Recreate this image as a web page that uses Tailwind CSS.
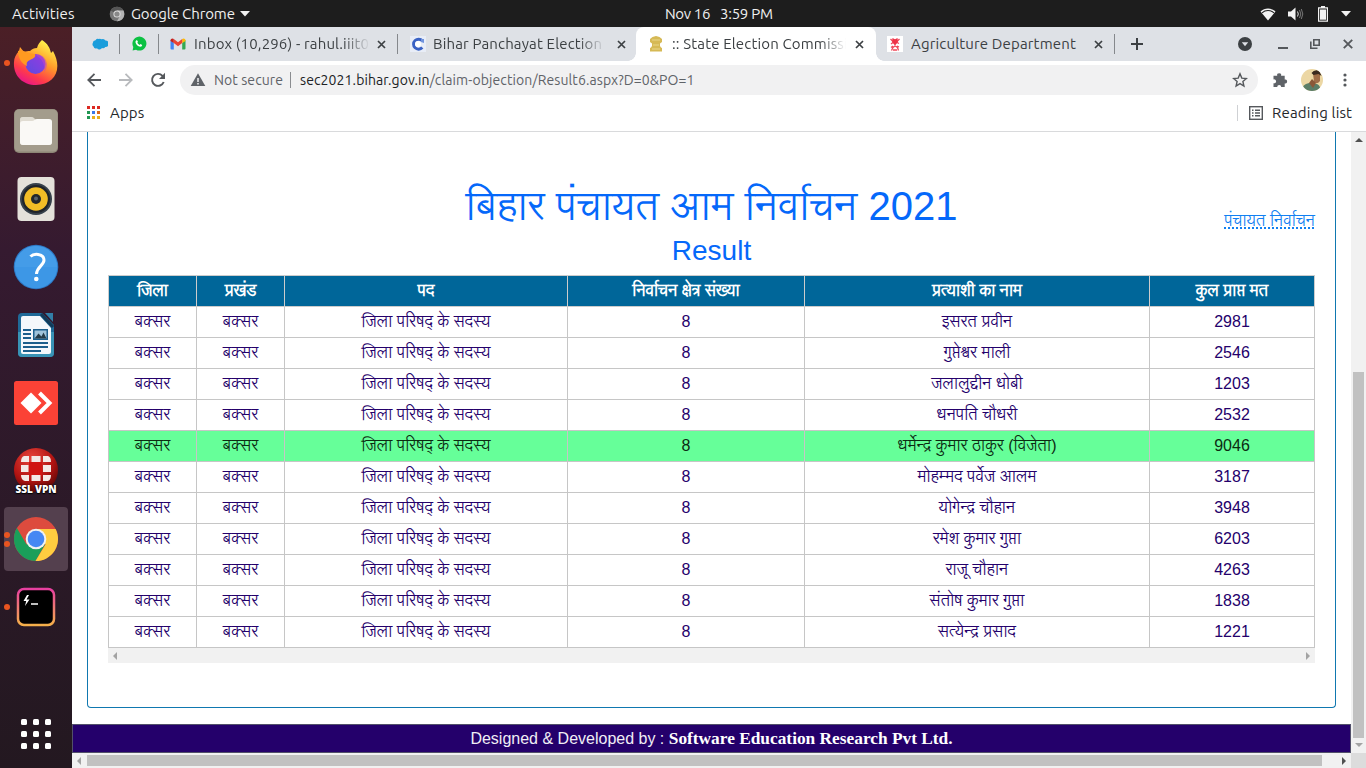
<!DOCTYPE html>
<html lang="hi">
<head>
<meta charset="utf-8">
<title>:: State Election Commission</title>
<script src="https://cdn.jsdelivr.net/npm/@tailwindcss/browser@4"></script>
</head>
<body class="w-[1366px] h-[768px] overflow-hidden bg-white flex flex-col font-['Ubuntu','Noto_Sans',sans-serif]">

<!-- Desktop top bar -->
<header class="h-[27px] shrink-0 bg-[#1d1d1d] text-[#f0f0f0] text-[15px] leading-[27px] grid grid-cols-[1fr_auto_1fr] whitespace-nowrap">
  <div class="flex items-center pl-3">
    <span class="w-[97px] tracking-[0.1px]">Activities</span>
    <svg class="w-4 h-4 mr-[6px]" viewBox="0 0 16 16"><circle cx="8" cy="8" r="7.3" fill="#777"/><path d="M8 8 1.7 4.4A7.3 7.3 0 0 1 14.5 4.6H8Z" fill="#555"/><path d="M8 4.6h6.5A7.3 7.3 0 0 1 8 15.3l3-5.5Z" fill="#b4b4b4"/><circle cx="8" cy="8" r="3.6" fill="#ddd"/><circle cx="8" cy="8" r="2.6" fill="#888"/></svg>
    <span class="w-[104px] tracking-[-0.1px]">Google Chrome</span>
    <svg class="w-[10px] h-[6px] ml-[5px]" viewBox="0 0 10 6"><path d="M0 0h10L5 5.5Z" fill="#f2f2f2"/></svg>
  </div>
  <div class="flex gap-[10px] pl-[72px]"><span class="w-[45px] tracking-[-0.35px]">Nov 16</span><span class="w-[53px] tracking-[-0.25px]">3:59 PM</span></div>
  <div class="flex items-center justify-end pr-[15px]">
    <svg class="w-4 h-[14px] mr-[12px]" viewBox="0 0 16 14"><path d="M0.5 4.6C4.5.6 11.500.6 15.500 4.600L8 13.500Z" fill="#f2f2f2"/><path d="M2 5.800C5.500 2.800 10.500 2.800 14 5.800" fill="none" stroke="#1d1d1d" stroke-width="1.100"/></svg>
    <svg class="w-4 h-[14px] mr-[14px]" viewBox="0 0 16 14"><path d="M0 4.500h3L7.500.5v13L3 9.500H0Z" fill="#f2f2f2"/><path d="M9.500 4.500q1.600 2.500 0 5" stroke="#ddd" fill="none"/><path d="M11.500 3q2.600 4 0 8M13.300 2q3 5 0 10" stroke="#777" fill="none"/></svg>
    <svg class="w-[10px] h-[16px] mr-[13px]" viewBox="0 0 10 16"><path d="M3 0h4v1.300h3V15.800H0V1.300H3Z" fill="#f2f2f2"/><path d="M1.200 2.500h7.600v12.100H1.200Z" fill="#1d1d1d"/><path d="M2 3.500h6v10.200H2Z" fill="#f2f2f2"/></svg>
    <svg class="w-[10px] h-[6px]" viewBox="0 0 10 6"><path d="M0 0h10L5 5.500Z" fill="#f2f2f2"/></svg>
  </div>
</header>

<div class="flex flex-1 min-h-0">

<!-- Dock -->
<nav class="w-[72px] shrink-0 bg-linear-to-b from-[#4b1f26] via-[#351a30] via-30% to-[#231820] pt-1 px-1 flex flex-col gap-1">
  <div class="h-16 relative flex items-center justify-center">
    <i class="absolute left-0 top-[29px] w-[6px] h-[6px] rounded-full bg-[#e95420]"></i>
    <svg class="w-[46px] h-[48px]" viewBox="0 0 46 48"><defs><linearGradient id="fx" x1=".8" y1=".1" x2=".3" y2="1"><stop offset="0" stop-color="#fff04a"/><stop offset=".4" stop-color="#ff9a2a"/><stop offset=".75" stop-color="#ff3b4a"/><stop offset="1" stop-color="#e8158a"/></linearGradient><linearGradient id="fp" x1="0" y1="1" x2="1" y2="0"><stop offset="0" stop-color="#5b4be0"/><stop offset="1" stop-color="#9a3ae0"/></linearGradient></defs><path d="M29 1c6 4 8 8 9 13l2-2c10 18 2 34-17 34C9 46 0 36 1 23c0-4 2-8 5-11l1-4 4 5c2-1 4-1 6-1 2-2 4-3 7-3 1-4 3-6 5-8Z" fill="url(#fx)"/><circle cx="22.500" cy="25" r="10" fill="url(#fp)"/><path d="M5 12c4-1 7 0 9 2l8 1c1 3-1 4-5 6-3 1-4 3-3 6-5-2-9-8-9-15Z" fill="#ff9a20"/><path d="M22 16c5-2 11 2 12 9 0 3-1 6-3 8 1-7-1-13-9-17Z" fill="#c04ac0" opacity=".5"/></svg>
  </div>
  <div class="h-16 flex items-center justify-center">
    <svg class="w-[46px] h-[46px]" viewBox="0 0 46 46"><rect x="1" y="1" width="44" height="44" rx="5" fill="#8d8676"/><rect x="1.500" y="1.500" width="43" height="42" rx="4.500" fill="#a39c8c"/><path d="M7 12q0-3 3-3h9q1.500 0 2.500 1.500L23 12h12v6H7Z" fill="#d3cec2"/><path d="M7 12q0-3 3-3h8q2 0 3 1.500t3 1.500h12q3 0 3 3v19q0 3-3 3H10q-3 0-3-3Z" fill="#e0dcd2"/><path d="M7 16q0-3 3-3h9q1.500 0 2.500-1t2.500-1h12q3 0 3 3v20q0 3-3 3H10q-3 0-3-3Z" fill="#faf9f6"/></svg>
  </div>
  <div class="h-16 flex items-center justify-center">
    <svg class="w-[38px] h-[46px]" viewBox="0 0 38 46"><rect x=".5" y="1" width="37" height="44" rx="4" fill="#e4e1da"/><circle cx="19" cy="23" r="16" fill="#36404a"/><circle cx="19" cy="23" r="14" fill="#20242a"/><circle cx="19" cy="23" r="11.800" fill="#f2bd26"/><circle cx="19" cy="23" r="5" fill="#23272c"/><circle cx="19" cy="22.500" r="2" fill="#59626b"/></svg>
  </div>
  <div class="h-16 flex items-center justify-center">
    <svg class="w-[46px] h-[46px]" viewBox="0 0 46 46"><circle cx="23" cy="23" r="22.300" fill="#2c77c4"/><circle cx="23" cy="23" r="21.300" fill="#3d97e6"/><path d="M2 23a21 21 0 0 1 42 0Z" fill="#4ba2ea" opacity=".5"/><path d="M17.500 12.500c3-3 13-3.500 13.500 3.500 0 5.500-7 6.500-7.500 14" fill="none" stroke="#fff" stroke-width="3"/><circle cx="23.300" cy="35" r="2.300" fill="#fff"/></svg>
  </div>
  <div class="h-16 flex items-center justify-center">
    <svg class="w-[38px] h-[46px]" viewBox="0 0 38 46"><path d="M5 1h20l12 12v28q0 4-4 4H5q-4 0-4-4V5q0-4 4-4Z" fill="#1f6a98"/><path d="M5 20H1v21q0 4 4 4h28q4 0 4-4V20Z" fill="#3893b5"/><path d="M6 4h17l11 12v24q0 2-2 2H6q-2 0-2-2V6q0-2 2-2Z" fill="#f4f8fb"/><path d="M28 1h8v9Z" fill="#327fa8"/><path d="M24 2l12 13" stroke="#123a58" stroke-width="3"/><g fill="#1c5f8c"><path d="M6 17h8v2H6zM6 21h8v2H6zM6 25h8v2H6zM6 30h25v2H6zM6 34h25v2H6zM6 38h18v2H6zM16 17h15v11H16z"/></g><path d="M17.500 18.500h12v8h-12z" fill="#9fc3da"/><path d="M17.500 26.500l4-5 3 3 2-4 3 6Z" fill="#263c48"/></svg>
  </div>
  <div class="h-16 flex items-center justify-center">
    <svg class="w-[46px] h-[46px]" viewBox="0 0 46 46"><rect x="1" y="1" width="44" height="44" rx="2.500" fill="#fb4236"/><path d="M7.500 23 18 12.500 28.500 23 18 33.500Z" fill="#fff"/><path d="M26.500 13 36.500 23l-10 10" stroke="#fff" stroke-width="4" fill="none"/></svg>
  </div>
  <div class="h-16 relative flex items-center justify-center">
    <svg class="w-[48px] h-[48px]" viewBox="0 0 48 48"><defs><radialGradient id="sv" cx=".4" cy=".25" r=".8"><stop offset="0" stop-color="#e8453c"/><stop offset=".6" stop-color="#b31412"/><stop offset="1" stop-color="#5a0606"/></radialGradient></defs><circle cx="24" cy="23" r="22" fill="url(#sv)"/><path d="M17 15h13v14H17z" fill="#d01512"/><g fill="#f3e9e6"><path d="M12 9h5v6H9q0-5 3-6zM19.500 9h9v6h-9zM31 9h5q3 1 3 6h-8zM9 18h7.500v7H9zM31 18h8v7h-8zM9 28h8v6h-4q-4-1-4-6zM19.500 28h9v6h-9zM31 28h8q0 5-3 6h-5z"/></g></svg>
    <b class="absolute bottom-[8px] left-0 right-0 text-center text-[10px] leading-[11px] text-white font-['Open_Sans',sans-serif] font-extrabold tracking-[-0.1px] whitespace-nowrap [text-shadow:0_0_2px_#000,0_1px_1px_#000]">SSL VPN</b>
  </div>
  <div class="h-16 relative flex items-center justify-center rounded-[4px] bg-[#54404e]">
    <i class="absolute left-0 top-[25px] w-[6px] h-[6px] rounded-full bg-[#e95420]"></i>
    <i class="absolute left-0 top-[34px] w-[6px] h-[6px] rounded-full bg-[#e95420]"></i>
    <svg class="w-[46px] h-[46px]" viewBox="0 0 46 46"><circle cx="23" cy="23" r="22" fill="#dd4b3e"/><path d="M3.900 12A22 22 0 0 0 22.500 45L32 28.500 23 23 13.500 28.500Z" fill="#1a9f5a"/><path d="M23 13h19.600A22 22 0 0 1 22.500 45l10-16.500Z" fill="#ffcd40"/><circle cx="23" cy="23" r="10.300" fill="#f1f1f1"/><circle cx="23" cy="23" r="8.300" fill="#4587f3"/></svg>
  </div>
  <div class="h-16 relative flex items-center justify-center">
    <i class="absolute left-0 top-[29px] w-[6px] h-[6px] rounded-full bg-[#e95420]"></i>
    <svg class="w-[40px] h-[40px]" viewBox="0 0 40 40"><defs><linearGradient id="tm" x1="0" y1="0" x2="0" y2="1"><stop offset="0" stop-color="#e83fa0"/><stop offset="1" stop-color="#f5b04a"/></linearGradient></defs><rect x="2" y="2" width="36" height="36" rx="6" fill="#000" stroke="url(#tm)" stroke-width="2.500"/><path d="M11 8 7.500 14h2.700L9 19l4.500-6.500h-3L13 8Z" fill="#fff"/><path d="M15 17h7" stroke="#fff" stroke-width="1.500"/></svg>
  </div>
  <div class="mt-auto mb-[19px] mx-auto grid grid-cols-3 gap-[6px]">
    <i class="w-[6px] h-[6px] rounded-[1.500px] bg-white"></i><i class="w-[6px] h-[6px] rounded-[1.500px] bg-white"></i><i class="w-[6px] h-[6px] rounded-[1.500px] bg-white"></i>
    <i class="w-[6px] h-[6px] rounded-[1.500px] bg-white"></i><i class="w-[6px] h-[6px] rounded-[1.500px] bg-white"></i><i class="w-[6px] h-[6px] rounded-[1.500px] bg-white"></i>
    <i class="w-[6px] h-[6px] rounded-[1.500px] bg-white"></i><i class="w-[6px] h-[6px] rounded-[1.500px] bg-white"></i><i class="w-[6px] h-[6px] rounded-[1.500px] bg-white"></i>
  </div>
</nav>

<!-- Browser window -->
<div class="flex-1 min-w-0 flex flex-col">

  <!-- Tab strip -->
  <div class="h-[34px] shrink-0 bg-[#dee1e6] flex items-center text-[15px] text-[#3c4043] whitespace-nowrap">
    <div class="w-[47px] pl-5"><svg class="w-4 h-4" viewBox="0 0 16 16"><path d="M3.500 4.200A3 3 0 0 1 6.800 3 3 3 0 0 1 9.500 3.300 3.200 3.200 0 0 1 13.500 4.500 3.200 3.200 0 0 1 13.200 11 2.500 2.500 0 0 1 10 12 3 3 0 0 1 5 12.300 2.600 2.600 0 0 1 1.500 10.500 3 3 0 0 1 .8 7 3 3 0 0 1 3.500 4.200Z" fill="#1a9ddb"/></svg></div>
    <i class="w-px h-5 bg-[#85888c]"></i>
    <div class="w-[38px] pl-[11px]"><svg class="w-4 h-4" viewBox="0 0 16 16"><path d="M1.600 14.500 2.300 11A7 7 0 1 1 5 13.700Z" fill="#0cc143"/><path d="M5.300 4.300q.8-.5 1.200.5l.4 1q-.1.500-.6.900.8 1.500 2.400 2.200l.8-.8 1.700.8q0 1.500-1.800 1.800C7 10.700 4.300 8 4.500 5.500Z" fill="#fff"/></svg></div>
    <i class="w-px h-5 bg-[#85888c]"></i>
    <div class="w-[238px] pl-[11px] flex items-center">
      <svg class="w-4 h-4 shrink-0" viewBox="0 0 16 16"><path d="M.5 4v8.500q0 1 1 1h2.300V7Z" fill="#4285f4"/><path d="M15.500 4v8.500q0 1-1 1h-2.300V7Z" fill="#34a853"/><path d="M.5 4.300q0-1.800 2-1.800L3.800 3v4L.5 4.900Z" fill="#c5221f"/><path d="M15.500 4.300q0-1.800-2-1.800L12.200 3v4l3.300-2.100Z" fill="#fbbc04"/><path d="M3.800 3 8 6.200 12.200 3v4L8 10.200 3.800 7Z" fill="#ea4335"/></svg>
      <span class="ml-2 w-[176px] mask-r-from-85% tracking-[0.15px]">Inbox (10,296) - rahul.iiit0</span>
      <svg class="w-[9px] h-[9px] ml-[7px]" viewBox="0 0 9 9"><path d="M1 1l7 7M8 1 1 8" stroke="#3c4043" stroke-width="1.700"/></svg>
    </div>
    <i class="w-px h-5 bg-[#85888c]"></i>
    <div class="w-[238px] pl-[12px] flex items-center">
      <svg class="w-4 h-4 shrink-0" viewBox="0 0 16 16"><rect width="16" height="16" fill="#e8edf7"/><path d="M12.300 4.800A5 5 0 1 0 12.300 11.500" stroke="#3a62c4" stroke-width="3" fill="none"/><path d="M11 3l3 0v4l-3-1Z" fill="#6f93dd"/><circle cx="8" cy="8" r="3" fill="#fff"/></svg>
      <span class="ml-[7px] w-[172px] mask-r-from-85% tracking-[0.15px]">Bihar Panchayat Election</span>
      <svg class="w-[9px] h-[9px] ml-[12px]" viewBox="0 0 9 9"><path d="M1 1l7 7M8 1 1 8" stroke="#3c4043" stroke-width="1.700"/></svg>
    </div>
    <div class="w-[240px] h-full pl-[12px] flex items-center bg-white rounded-t-[8px] relative">
      <i class="absolute -left-2 bottom-0 w-2 h-2 bg-[radial-gradient(circle_at_0_0,#dee1e6_7.5px,#fff_8px)]"></i>
      <i class="absolute -right-2 bottom-0 w-2 h-2 bg-[radial-gradient(circle_at_100%_0,#dee1e6_7.5px,#fff_8px)]"></i>
      <svg class="w-4 h-4 shrink-0" viewBox="0 0 16 16"><path d="M2 3 4.500 1 8 0l3.500 1L14 3v3l-2 1.500v2.500l1 1.500 1 .5v3.500H2V12l1-.5 1-1.500V7.500L2 6Z" fill="#d6b955"/><path d="M4 4h8M5 9h6M4 13h8" stroke="#e9d68a"/></svg>
      <span class="ml-2 w-[174px] mask-r-from-85% tracking-[0.15px]">:: State Election Commissi</span>
      <svg class="w-[9px] h-[9px] ml-[9px]" viewBox="0 0 9 9"><path d="M1 1l7 7M8 1 1 8" stroke="#3c4043" stroke-width="1.700"/></svg>
    </div>
    <div class="w-[238px] pl-[11px] flex items-center">
      <svg class="w-4 h-4 shrink-0" viewBox="0 0 16 16"><rect width="16" height="16" fill="#fff"/><path d="M3.500 3l2 2M12.500 3l-2 2M4 8l2-1.500M12 7.500l-2-1M4.500 14.500 6 11.500 8 10l2.500 1.500 1 3M4 11.500 6 10M12 11l-2-1M6 14h4" stroke="#f0485a" stroke-width="1.300" fill="none"/><path d="M5.500 2 8 3.200 10.500 2l.5 4-3 3.500L5 6Z" fill="#ee3348"/></svg>
      <span class="ml-2 w-[175px] tracking-[0.15px]">Agriculture Department</span>
      <svg class="w-[9px] h-[9px] ml-[8px]" viewBox="0 0 9 9"><path d="M1 1l7 7M8 1 1 8" stroke="#3c4043" stroke-width="1.700"/></svg>
    </div>
    <i class="w-px h-5 bg-[#85888c]"></i>
    <svg class="w-3 h-3 ml-4" viewBox="0 0 12 12"><path d="M6 0v12M0 6h12" stroke="#3c4043" stroke-width="2"/></svg>
    <div class="ml-auto flex items-center pr-[13px]">
      <svg class="w-[14px] h-[14px]" viewBox="0 0 14 14"><circle cx="7" cy="7" r="7" fill="#3c4043"/><path d="M3.800 5.300h6.400L7 9.300Z" fill="#dee1e6"/></svg>
      <svg class="w-[10px] h-[14px] ml-[26px]" viewBox="0 0 10 14"><path d="M0 11h10" stroke="#55585c" stroke-width="2"/></svg>
      <svg class="w-[10px] h-[10px] ml-[22px]" viewBox="0 0 10 10"><path d="M3.800.8h5.400v5.400H3.800ZM.8 2.500v6.700H7.500" stroke="#55585c" stroke-width="1.600" fill="none"/></svg>
      <svg class="w-[10px] h-[10px] ml-[23px]" viewBox="0 0 10 10"><path d="M.8.8l8.400 8.400M9.200.8.8 9.200" stroke="#55585c" stroke-width="1.900"/></svg>
    </div>
  </div>

  <!-- Toolbar -->
  <div class="h-[38px] shrink-0 flex items-center pl-[15px] pr-[19px]">
    <svg class="w-[14px] h-[14px]" viewBox="0 0 14 14"><path d="M14 7H1.500M7.500.8 1.300 7l6.200 6.200" stroke="#55585c" stroke-width="1.800" fill="none"/></svg>
    <svg class="w-[14px] h-[14px] ml-[18px]" viewBox="0 0 14 14"><path d="M0 7h12.500M6.500.8 12.700 7l-6.200 6.200" stroke="#b8babd" stroke-width="1.800" fill="none"/></svg>
    <svg class="w-4 h-4 ml-[17px]" viewBox="0 0 16 16"><path d="M13.700 10A6 6 0 1 1 12.500 3.800L14 5.300" stroke="#55585c" stroke-width="1.900" fill="none"/><path d="M15 .8V7H9Z" fill="#55585c"/></svg>
    <div class="ml-[14px] w-[1078px] h-[30px] rounded-full bg-[#f1f1f2] flex items-center pl-[10px] pr-[10px] text-[14px] text-[#5f6368] whitespace-nowrap">
      <svg class="w-4 h-4" viewBox="0 0 16 16"><path d="M8 1.300 15.300 14H.7Z" fill="#5f6368"/><path d="M8 6v4M8 11v1.600" stroke="#f1f1f2" stroke-width="1.500"/></svg>
      <span class="ml-2 w-[76px] tracking-[0.08px]">Not secure</span>
      <i class="w-px h-4 bg-[#8a8c90]"></i>
      <span class="ml-[9px] tracking-[0.1px]"><span class="text-[#202124]">sec2021.bihar.gov.in</span>/claim-objection/Result6.aspx?D=0&amp;PO=1</span>
      <svg class="w-4 h-4 ml-auto" viewBox="0 0 16 16"><path d="M8 1.800l1.800 4.300 4.600.4-3.500 3 1 4.500L8 11.600 4.100 14l1-4.500-3.500-3 4.600-.4Z" fill="none" stroke="#55585c" stroke-width="1.400"/></svg>
    </div>
    <svg class="w-4 h-4 ml-[14px]" viewBox="0 0 16 16"><path d="M1.500 3.800h3.700a2 2 0 1 1 3.900 0h3.600v3.700a2 2 0 1 1 0 3.900v3.600H9.200a2 2 0 1 0-4 0H1.500v-3.800a2 2 0 1 0 0-3.800Z" fill="#5f6368"/></svg>
    <svg class="w-[22px] h-[22px] ml-[13px]" viewBox="0 0 22 22"><defs><clipPath id="av"><circle cx="11" cy="11" r="11"/></clipPath></defs><g clip-path="url(#av)"><rect width="22" height="22" fill="#ecd7a4"/><path d="M1 22q0-7 7-8l8 1q4 2 4 8Z" fill="#5b7d67"/><path d="M12 4h7v8q-3 4-6 1Z" fill="#a06d48"/><path d="M10.500 4q3-4 8-2l2 5-3-2-5 1Z" fill="#3a2a20"/><path d="M11 10l4 4-3 5-4-5Z" fill="#8a5838"/></g></svg>
    <svg class="w-1 h-[14px] ml-auto" viewBox="0 0 4 14"><g fill="#55585c"><circle cx="2" cy="2" r="1.600"/><circle cx="2" cy="7" r="1.600"/><circle cx="2" cy="12" r="1.600"/></g></svg>
  </div>

  <!-- Bookmarks bar -->
  <div class="h-[33px] shrink-0 border-b border-[#d9dadc] flex items-center pl-[15px] pr-[14px] pb-[5px] text-[15px] text-[#25282b] whitespace-nowrap">
    <svg class="w-[13px] h-[13px]" viewBox="0 0 13 13"><path d="M0 0h3v3H0zM5 0h3v3H5zM10 0h3v3h-3z" fill="#dc2a22"/><path d="M0 5h3v3H0z" fill="#219653"/><path d="M5 5h3v3H5z" fill="#3a78e8"/><path d="M10 5h3v3h-3z" fill="#d9671e"/><path d="M0 10h3v3H0z" fill="#219653"/><path d="M5 10h3v3H5zM10 10h3v3h-3z" fill="#e8ae1c"/></svg>
    <span class="ml-[10px] pt-[2px] tracking-[0.15px]">Apps</span>
    <i class="ml-auto w-px h-4 bg-[#cfd1d4]"></i>
    <svg class="w-[14px] h-[14px] ml-[11px]" viewBox="0 0 14 14"><rect x=".7" y=".7" width="12.600" height="12.600" fill="none" stroke="#55585c" stroke-width="1.400"/><path d="M3 4.200h1.500M3 7h1.500M3 9.800h1.500M6 4.200h5M6 7h5M6 9.800h5" stroke="#55585c" stroke-width="1.400"/></svg>
    <span class="ml-[9px] pt-[2px] w-[80px] tracking-[0.15px]">Reading list</span>
  </div>

  <!-- Page viewport -->
  <div class="flex-1 min-h-0 flex">
    <main class="flex-1 min-w-0 flex flex-col font-['Liberation_Sans','Lohit_Devanagari','Noto_Sans_Devanagari',sans-serif]">
      <section class="h-[576px] ml-[15px] mr-[15px] border border-t-0 border-[#0f78b0] rounded-b-[4px] px-5 flex flex-col">
        <div class="h-[143px] shrink-0 grid grid-cols-[1fr_auto_1fr] text-[#0568fa]">
          <div></div>
          <div class="text-center whitespace-nowrap">
            <h1 class="text-[40px] leading-[48px] mt-[50px]">बिहार पंचायत आम निर्वाचन 2021</h1>
            <h2 class="text-[28px] leading-[34px] mt-[4px]">Result</h2>
          </div>
          <div class="text-right pt-[77px]"><a class="text-[16px] leading-6 text-[#1180f2] underline decoration-dotted decoration-2 whitespace-nowrap">पंचायत निर्वाचन</a></div>
        </div>
        <table class="w-[1207px] table-fixed border-collapse text-center text-[16px] leading-[24px] text-[#24006b] whitespace-nowrap">
          <colgroup><col class="w-[88px]"><col class="w-[88px]"><col class="w-[283px]"><col class="w-[237px]"><col class="w-[345px]"><col class="w-[165px]"></colgroup>
          <thead><tr class="h-[31px] bg-[#006699] text-white [&>th]:border [&>th]:border-[#cccccc] [&>th]:p-0 [&>th]:font-bold"><th>जिला</th><th>प्रखंड</th><th>पद</th><th>निर्वाचन क्षेत्र संख्या</th><th>प्रत्याशी का नाम</th><th>कुल प्राप्त मत</th></tr></thead>
          <tbody class="[&_td]:border [&_td]:border-[#c6c6c6] [&_td]:p-0">
            <tr class="h-[31px]"><td>बक्सर</td><td>बक्सर</td><td>जिला परिषद् के सदस्य</td><td>8</td><td>इसरत प्रवीन</td><td>2981</td></tr>
            <tr class="h-[31px]"><td>बक्सर</td><td>बक्सर</td><td>जिला परिषद् के सदस्य</td><td>8</td><td>गुप्तेश्वर माली</td><td>2546</td></tr>
            <tr class="h-[31px]"><td>बक्सर</td><td>बक्सर</td><td>जिला परिषद् के सदस्य</td><td>8</td><td>जलालुद्दीन धोबी</td><td>1203</td></tr>
            <tr class="h-[31px]"><td>बक्सर</td><td>बक्सर</td><td>जिला परिषद् के सदस्य</td><td>8</td><td>धनपति चौधरी</td><td>2532</td></tr>
            <tr class="h-[31px] bg-[#66ff99] text-[#0c2b12]"><td>बक्सर</td><td>बक्सर</td><td>जिला परिषद् के सदस्य</td><td>8</td><td>धर्मेन्द्र कुमार ठाकुर (विजेता)</td><td>9046</td></tr>
            <tr class="h-[31px]"><td>बक्सर</td><td>बक्सर</td><td>जिला परिषद् के सदस्य</td><td>8</td><td>मोहम्मद पर्वेज आलम</td><td>3187</td></tr>
            <tr class="h-[31px]"><td>बक्सर</td><td>बक्सर</td><td>जिला परिषद् के सदस्य</td><td>8</td><td>योगेन्द्र चौहान</td><td>3948</td></tr>
            <tr class="h-[31px]"><td>बक्सर</td><td>बक्सर</td><td>जिला परिषद् के सदस्य</td><td>8</td><td>रमेश कुमार गुप्ता</td><td>6203</td></tr>
            <tr class="h-[31px]"><td>बक्सर</td><td>बक्सर</td><td>जिला परिषद् के सदस्य</td><td>8</td><td>राजू चौहान</td><td>4263</td></tr>
            <tr class="h-[31px]"><td>बक्सर</td><td>बक्सर</td><td>जिला परिषद् के सदस्य</td><td>8</td><td>संतोष कुमार गुप्ता</td><td>1838</td></tr>
            <tr class="h-[31px]"><td>बक्सर</td><td>बक्सर</td><td>जिला परिषद् के सदस्य</td><td>8</td><td>सत्येन्द्र प्रसाद</td><td>1221</td></tr>
          </tbody>
        </table>
        <div class="h-[15px] shrink-0 bg-[#f1f1f1] flex items-center justify-between px-[5px]">
          <svg class="w-1 h-2" viewBox="0 0 4 8"><path d="M4 0v8L0 4Z" fill="#a3a3a3"/></svg>
          <svg class="w-1 h-2" viewBox="0 0 4 8"><path d="M0 0v8L4 4Z" fill="#a3a3a3"/></svg>
        </div>
      </section>
      <footer class="mt-4 h-[29px] bg-[#24006b] border border-[#52506a] text-[#f0eef5] text-[16px] leading-[27px] text-center whitespace-nowrap">Designed &amp; Developed by : <b class="font-['Liberation_Serif',serif] text-[17.33px] text-white">Software Education Research Pvt Ltd.</b></footer>
    </main>
    <div class="w-[15px] shrink-0 bg-[#f1f1f1] flex flex-col items-center pt-[6px] pb-[6px]">
      <svg class="w-2 h-1 shrink-0" viewBox="0 0 8 4"><path d="M0 4h8L4 0Z" fill="#505050"/></svg>
      <i class="w-[11px] h-[366px] mt-[230px] bg-[#c1c1c1]"></i>
      <svg class="w-2 h-1 mt-[5px] shrink-0" viewBox="0 0 8 4"><path d="M0 0h8L4 4Z" fill="#a3a3a3"/></svg>
    </div>
  </div>
  <div class="h-[15px] shrink-0 flex">
    <div class="flex-1 bg-[#f1f1f1] flex items-center px-[5px]">
      <svg class="w-1 h-2" viewBox="0 0 4 8"><path d="M4 0v8L0 4Z" fill="#a3a3a3"/></svg>
      <i class="ml-[6px] w-[1235px] h-[11px] bg-[#c1c1c1]"></i>
      <svg class="w-1 h-2 ml-auto" viewBox="0 0 4 8"><path d="M0 0v8L4 4Z" fill="#505050"/></svg>
    </div>
    <div class="w-[15px] bg-[#dcdcdc]"></div>
  </div>
</div>
</div>
</body>
</html>
